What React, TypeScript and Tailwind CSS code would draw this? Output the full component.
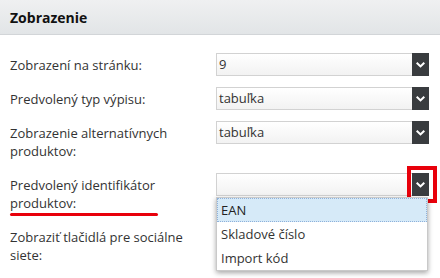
import React from 'react';

const rows = [
  { label: 'Zobrazení na stránku:', value: '9' },
  { label: 'Predvolený typ výpisu:', value: 'tabuľka' },
  { label: 'Zobrazenie alternatívnych produktov:', value: 'tabuľka' },
];

function Chevron() {
  return (
    <svg width="9" height="6" viewBox="0 0 9 6">
      <polygon points="0,1.4 1.4,0 4.5,3 7.6,0 9,1.4 4.5,5.8" fill="#fff" />
    </svg>
  );
}

function Select({ value, children }: { value?: string; children?: React.ReactNode }) {
  return (
    <div className="relative w-[213px] h-[23px]">
      <div className="h-full w-[196px] border border-[#d2d2d2] border-r-0 bg-gradient-to-b from-white to-[#f2f2f2] pl-[2px] leading-[21px] text-[#333]">
        {value}
      </div>
      <div className="absolute right-0 top-0 h-[23px] w-[17px] bg-[#393c3f] flex items-center justify-center">
        <Chevron />
      </div>
      {children}
    </div>
  );
}

export default function App() {
  return (
    <div className="w-[440px] h-[278px] overflow-hidden bg-white font-['Open_Sans',sans-serif] text-[13px] text-[#333]">
      {/* hlavička sekcie */}
      <div className="h-[35px] border-b border-[#d2d5d8] bg-gradient-to-b from-[#eff0f1] to-[#e2e5e7] pl-[10px] flex items-center text-[14px] font-bold text-[#111]">
        Zobrazenie
      </div>

      <div className="pt-[18px] pl-[10px] flex flex-col gap-[11px]">
        {rows.map((r) => (
          <div key={r.label} className="flex items-start">
            <div className="w-[206px] pr-[12px] pt-[3px] pb-[2px] leading-[18px]">{r.label}</div>
            <Select value={r.value} />
          </div>
        ))}

        <div className="relative z-10 flex items-start">
          <div className="relative w-[206px] pr-[12px] pt-[3px] pb-[2px] leading-[18px]">
            Predvolený identifikátor produktov:
            <span className="absolute left-0 top-[40px] h-[3px] w-[148px] rounded-full bg-[#e8000b]" />
          </div>
          <Select>
            <div className="absolute -right-[8px] -top-[7px] h-[37px] w-[30px] border-4 border-[#e8000b]" />
            <div className="absolute left-0 top-[24px] w-[212px] border border-[#c9c9c9] bg-white shadow-[0_2px_5px_rgba(0,0,0,0.35)]">
              <div className="h-[24px] border border-dotted border-[#8fb1da] bg-[#d6eaf8] pl-[3px] leading-[22px] text-[#222]">
                EAN
              </div>
              <div className="h-[24px] pl-[4px] leading-[24px]">Skladové číslo</div>
              <div className="h-[24px] pl-[4px] leading-[24px]">Import kód</div>
            </div>
          </Select>
        </div>

        <div className="flex items-start">
          <div className="w-[206px] pr-[12px] pt-[3px] pb-[2px] leading-[18px]">
            Zobraziť tlačidlá pre sociálne siete:
          </div>
        </div>
      </div>
    </div>
  );
}
